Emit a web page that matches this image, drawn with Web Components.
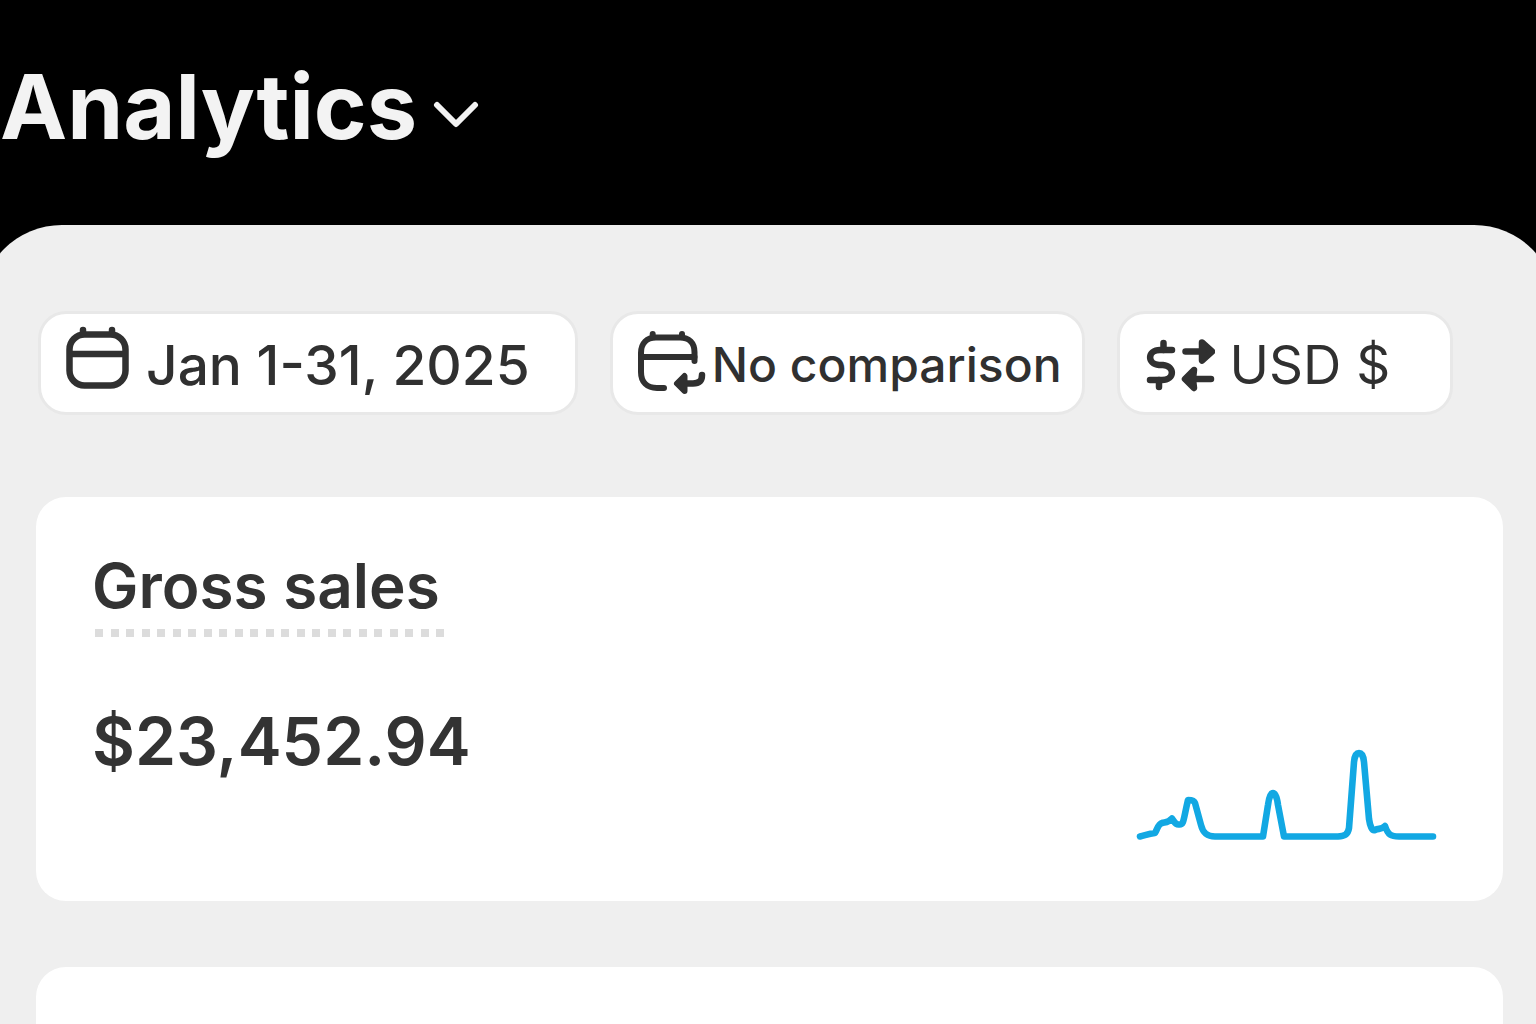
<!DOCTYPE html>
<html lang="en">
<head>
<meta charset="utf-8">
<meta name="viewport" content="width=device-width, initial-scale=1">
<title>Analytics</title>
<style>
  html, body { height: 100%; }
  body {
    margin: 0;
    overflow: hidden;
    background: #000;
    color: #333;
    font-family: Inter, "Liberation Sans", sans-serif;
  }
</style>
</head>
<body>
<analytics-page>
  <page-title slot="title">Analytics</page-title>
  <filter-pill slot="filters" icon="calendar" class="date">Jan 1-31, 2025</filter-pill>
  <filter-pill slot="filters" icon="compare" class="compare">No comparison</filter-pill>
  <filter-pill slot="filters" icon="currency" class="currency">USD $</filter-pill>
  <metric-card>
    <span slot="label">Gross sales</span>
    <span slot="value">$23,452.94</span>
    <spark-line slot="chart"></spark-line>
  </metric-card>
  <metric-card></metric-card>
</analytics-page>

<script>
  class BaseElement extends HTMLElement {
    connectedCallback() {
      if (this.shadowRoot) return;
      this.attachShadow({ mode: "open" }).innerHTML = this.render();
    }
  }

  customElements.define("analytics-page", class extends BaseElement {
    render() {
      return `
        <style>
          :host { display: flex; flex-direction: column; height: 100vh; overflow: hidden; }
          header { flex: none; padding: 53px 0 64px; }
          main {
            flex: 1 0 auto;
            margin: 0 -20px;
            padding: 86px 53px 0 56px;
            background: #efefef;
            border-radius: 82px 82px 0 0;
          }
          nav { display: flex; gap: 32px; padding: 0 2px; margin-bottom: 82px; }
          section { display: flex; flex-direction: column; gap: 66px; }
        </style>
        <header><slot name="title"></slot></header>
        <main>
          <nav aria-label="Filters"><slot name="filters"></slot></nav>
          <section><slot></slot></section>
        </main>`;
    }
  });

  customElements.define("page-title", class extends BaseElement {
    render() {
      return `
        <style>
          :host { display: block; }
          h1 { margin: 0; font-size: 90px; line-height: 108px; font-weight: 700; }
          button {
            display: flex; align-items: center; gap: 16px;
            margin: 0; padding: 0; border: 0; background: none;
            color: #f3f3f3; font: inherit; cursor: pointer;
          }
          svg { display: block; margin-top: 16px; }
        </style>
        <h1><button type="button" aria-haspopup="true"><slot></slot>
          <svg width="46" height="28" viewBox="0 0 46 28" fill="none" stroke="currentColor" stroke-width="6" stroke-linecap="round" stroke-linejoin="round" aria-hidden="true"><path d="M4 4 23 23 42 4"/></svg>
        </button></h1>`;
    }
  });

  const ICONS = {
    calendar: `<svg width="64" height="80" viewBox="0 0 64 80" fill="none" stroke="currentColor" stroke-width="6.5">
      <rect x="3.5" y="11.5" width="56" height="51" rx="15"/>
      <path d="M3.5 31H59.5"/><path d="M17 10V7M46 10V7" stroke-linecap="round"/></svg>`,
    compare: `<svg width="70" height="80" viewBox="0 0 70 80" fill="none" stroke="currentColor" stroke-width="6" stroke-linecap="round" stroke-linejoin="round">
      <path d="M27 65H20C10 65 4 59 4 49V30C4 20 10 14.5 19 14.5H43C52 14.5 57.5 20 57.5 29V38"/>
      <path d="M4 34H57.5M15.7 14V11M45 14V11"/>
      <path d="M65 52C65 58 62 60.5 56 60.5H48" stroke-width="6.5"/>
      <path d="M40 60.5 47.5 53V68Z" fill="currentColor"/></svg>`,
    currency: `<svg width="70" height="80" viewBox="0 0 70 80" fill="none" stroke="currentColor" stroke-width="6.5" stroke-linecap="round" stroke-linejoin="round">
      <path d="M27 27H15C2 27 2 41 14 42H18C30 43 30 57 17 57H5"/>
      <path d="M18.5 20V27M14 57V64"/>
      <path d="M40.5 28.5H62M46 56H66"/>
      <path d="M57 19.5 67 28.5 57 37.5ZM49 47 40 56 49 65 48 56Z" fill="currentColor"/></svg>`
  };

  customElements.define("filter-pill", class extends BaseElement {
    render() {
      return `
        <style>
          :host { display: block; flex: none; }
          button {
            display: flex; align-items: center; gap: var(--gap);
            height: 104px; margin: 0; padding: var(--pad);
            border: 3px solid #e8e8e8; border-radius: 28px; background: #fff;
            color: #303030; font: var(--font); font-family: inherit;
            white-space: nowrap; cursor: pointer;
          }
          :host(.date) { --gap: 16px; --pad: 0 45px 0 25px; --font: 500 55px/64px Inter; }
          :host(.compare) { --gap: 5px; --pad: 0 20px 0 24px; --font: 500 48px/64px Inter; }
          :host(.currency) { --gap: 15px; --pad: 0 60px 0 25px; --font: 400 53px/64px Inter; }
          svg { display: block; flex: none; }
          span { padding-top: 3px; }
        </style>
        <button type="button" aria-haspopup="true">${ICONS[this.getAttribute("icon")]}<span><slot></slot></span></button>`;
    }
  });

  customElements.define("metric-card", class extends BaseElement {
    render() {
      const text = this.querySelector("[slot=label]")
        ? `<div class="text"><h2><slot name="label"></slot></h2><p><slot name="value"></slot></p></div>`
        : "";
      return `
        <style>
          :host {
            display: flex; justify-content: space-between; align-items: flex-end;
            box-sizing: border-box; min-height: 404px; padding: 50px 63px 59px 56px;
            border-radius: 30px; background: #fff; color: #333;
            font-size: 62px; line-height: 78px; font-weight: 600;
          }
          .text { align-self: flex-start; display: flex; flex-direction: column; align-items: flex-start; gap: 65px; }
          h2 {
            margin: 0; padding: 0 4px 12px 0; font: inherit;
            background: linear-gradient(90deg, #dcdcdc 8px, transparent 8px 16px, #dcdcdc 16px 24px, transparent 24px) 3px 100% / 31px 8px repeat-x;
          }
          p { margin: 0; font-size: 66px; }
        </style>
        ${text}
        <slot name="chart"></slot>`;
    }
  });

  customElements.define("spark-line", class extends BaseElement {
    render() {
      return `
        <style>:host { display: block; } svg { display: block; }</style>
        <svg width="306" height="96" viewBox="0 0 306 96" fill="none" stroke="#12a8e3" stroke-width="6.6" stroke-linejoin="round" stroke-linecap="round" role="img" aria-label="Gross sales trend">
          <path d="M6 90.5C12 89 15 87.5 21 87C23 84 24 78 28 77C31 76 34 77 38 72.5C40 75 41 79 45 78.5C50 79 49 75 54 54C57 54 60 54 61 57L67 79C69 87 73 90.5 81 90.5H129L134 59C136 43 142 43 144 59L150 90.5H204C210 90 214 89 215 82L220 16C221 4 229 4 230 16L235 73C236 80 238 85 241 84C245 82 247 84 251 80C254 89 257 90.5 265 90.5H299"/>
        </svg>`;
    }
  });
</script>
</body>
</html>
